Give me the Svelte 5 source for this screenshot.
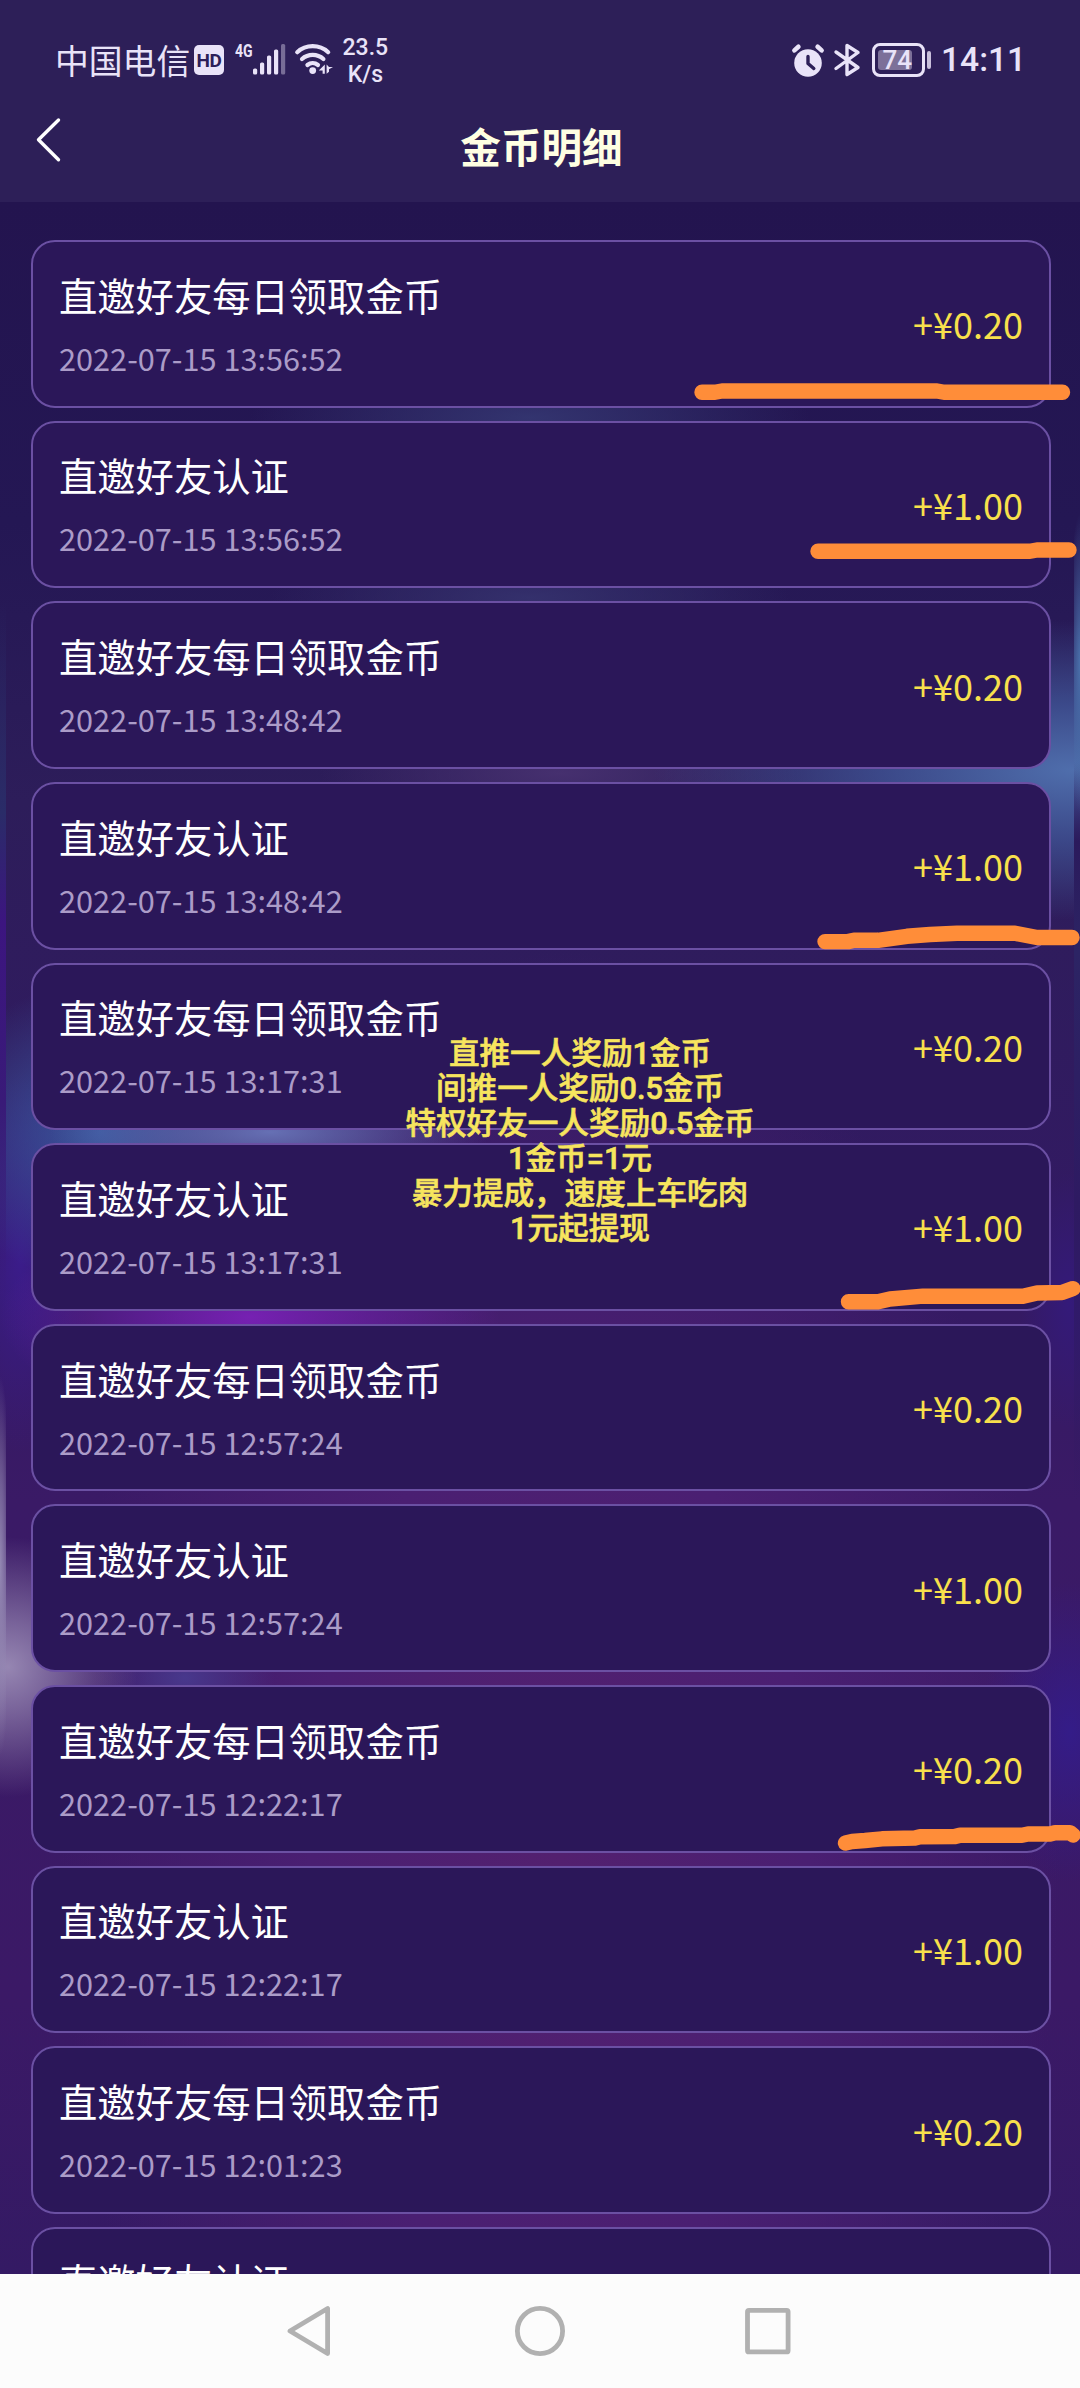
<script lang="ts">
    const DAILY = "直邀好友每日领取金币";
    const VERIFY = "直邀好友认证";

    const records = [
        { title: DAILY, time: "2022-07-15 13:56:52", amount: "0.20" },
        { title: VERIFY, time: "2022-07-15 13:56:52", amount: "1.00" },
        { title: DAILY, time: "2022-07-15 13:48:42", amount: "0.20" },
        { title: VERIFY, time: "2022-07-15 13:48:42", amount: "1.00" },
        { title: DAILY, time: "2022-07-15 13:17:31", amount: "0.20" },
        { title: VERIFY, time: "2022-07-15 13:17:31", amount: "1.00" },
        { title: DAILY, time: "2022-07-15 12:57:24", amount: "0.20" },
        { title: VERIFY, time: "2022-07-15 12:57:24", amount: "1.00" },
        { title: DAILY, time: "2022-07-15 12:22:17", amount: "0.20" },
        { title: VERIFY, time: "2022-07-15 12:22:17", amount: "1.00" },
        { title: DAILY, time: "2022-07-15 12:01:23", amount: "0.20" },
    ];

    const notes = [
        "直推一人奖励1金币",
        "间推一人奖励0.5金币",
        "特权好友一人奖励0.5金币",
        "1金币=1元",
        "暴力提成，速度上车吃肉",
        "1元起提现",
    ];

    // marker lines drawn over the list
    const strokes = [
        "702,392.3 715,392.3 722,391 937,391 944,392.3 1062.5,392.3",
        "818,551.3 1030,551.3 1037,550 1069,550",
        "825,941.6 848,941.6 854,940.3 878,940.3 907,936.3 930,934.5 957,933.2 1015,933.2 1037,937.5 1072,937.5",
        "848.5,1301.8 878,1301.8 890,1299 923,1296.2 1023,1296.2 1037,1293 1062,1292.5 1073,1288.6",
        "845.5,1843 852,1841.5 865,1840.5 882,1838.8 915,1838 920,1836.8 955,1836.5 960,1835.2 1022,1835.2 1028,1834 1050,1834 1055,1832.7 1070,1832.7 1073,1835",
    ];
</script>

<div class="screen">
    <header>
        <div class="status">
            <div class="status-left">
                <span class="carrier">中国电信</span>
                <span class="hd">HD</span>
                <span class="net">4G</span>
                <svg class="bars" width="34" height="32" viewBox="0 0 34 32">
                    <rect x="1" y="25.5" width="4.2" height="6" rx="1.6" />
                    <rect x="8" y="19.5" width="4.2" height="12" rx="1.6" />
                    <rect x="15" y="12.5" width="4.2" height="19" rx="1.6" />
                    <rect x="22" y="6.5" width="4.2" height="25" rx="1.6" />
                    <rect x="29" y="1" width="4.2" height="30.5" rx="1.6" opacity="0.4" />
                </svg>
                <svg class="wifi" width="40" height="34" viewBox="0 0 40 34">
                    <g fill="none" stroke="#e9e3f8" stroke-width="4.2" stroke-linecap="round">
                        <path d="M3.2 10.2a23 23 0 0 1 31 0" />
                        <path d="M8 17a16 16 0 0 1 21.4 0" />
                        <path d="M13.4 23a8.6 8.6 0 0 1 10.6 0" />
                    </g>
                    <circle cx="18.7" cy="28.6" r="3.4" />
                    <path d="M30.8 22.5v9.2h-2.2v-3.2h-3.8zM32.6 22.5v9.2l2.4-2v-2.4l4-2.2h-4z" />
                </svg>
                <span class="speed">23.5<br />K/s</span>
            </div>
            <div class="status-right">
                <svg width="34" height="34" viewBox="0 0 34 34">
                    <circle cx="17" cy="20" r="13.8" />
                    <path d="M3.4 7.4l4-3.6M30.6 7.4l-4-3.6" fill="none" stroke="#e9e3f8" stroke-width="4.6" stroke-linecap="round" />
                    <path d="M17 13.5v7l5.8 5" fill="none" stroke="#2d1f58" stroke-width="3.4" stroke-linecap="round" stroke-linejoin="round" />
                </svg>
                <svg class="bluetooth" width="28" height="34" viewBox="0 0 28 34">
                    <path d="M3 9l22 15.5-11 7V2.5l11 7L3 25.5" fill="none" stroke="#e9e3f8" stroke-width="3.4" stroke-linecap="round" stroke-linejoin="round" />
                </svg>
                <div class="battery"><span>74</span></div>
                <i class="nub"></i>
                <span class="clock">14:11</span>
            </div>
        </div>
        <div class="title-bar">
            <button class="back" aria-label="返回">
                <svg width="28" height="48" viewBox="0 0 28 48">
                    <path d="M24.5 4L4.5 23.8l20 20" fill="none" stroke="#fff" stroke-width="3.4" stroke-linecap="round" stroke-linejoin="round" />
                </svg>
            </button>
            <h1>金币明细</h1>
        </div>
    </header>

    <main>
        {#each records as record}
            <div class="card">
                <div class="info">
                    <div class="name">{record.title}</div>
                    <div class="time">{record.time}</div>
                </div>
                <div class="amount">+¥{record.amount}</div>
            </div>
        {/each}
        <div class="card last">
            <div class="name">{VERIFY}</div>
        </div>
    </main>

    <nav>
        <svg width="50" height="56" viewBox="0 0 50 56">
            <path d="M40.6 5.5v45L3 28z" />
        </svg>
        <svg width="56" height="56" viewBox="0 0 56 56">
            <circle cx="28" cy="28" r="22.6" />
        </svg>
        <svg width="50" height="56" viewBox="0 0 50 56">
            <rect x="4.5" y="7.3" width="40.6" height="41.6" rx="1.5" />
        </svg>
    </nav>

    <div class="notes">
        {#each notes as note}
            <div>{note}</div>
        {/each}
    </div>

    <svg class="marker" width="1080" height="2388" viewBox="0 0 1080 2388">
        {#each strokes as points}
            <polyline {points} />
        {/each}
    </svg>
</div>

<style>
    :global(body) {
        margin: 0;
        background: #fcfcfc;
    }

    .screen {
        position: relative;
        display: flex;
        flex-direction: column;
        width: 1080px;
        height: 2388px;
        overflow: hidden;
        font-family: "Noto Sans CJK SC", sans-serif;
    }

    header {
        height: 202px;
        flex: none;
        background: #2d1f58;
        color: #e9e3f8;
    }

    .status {
        display: flex;
        justify-content: space-between;
        height: 119px;
        padding: 0 59px 0 55px;
    }

    .status svg {
        fill: #e9e3f8;
    }

    .status-left,
    .status-right {
        display: flex;
        align-items: center;
        height: 120px;
    }

    .carrier {
        font-size: 33.8px;
        line-height: 40px;
        width: 139px;
        white-space: nowrap;
    }

    .hd {
        width: 30px;
        height: 30px;
        border-radius: 5px;
        background: #e9e3f8;
        color: #2d1f58;
        font: 700 19px/31px Roboto, sans-serif;
        text-align: center;
        letter-spacing: -0.5px;
    }

    .net {
        font: 700 19px/20px Roboto, sans-serif;
        width: 24px;
        margin: 0 -7px 18px 10.5px;
        transform: scaleX(0.74);
        transform-origin: left;
    }

    .bars {
        margin-top: -2px;
    }

    .wifi {
        margin: -2px 0 0 8px;
    }

    .speed {
        margin: 1px 0 0 9px;
        font: 500 23px/27px Roboto, sans-serif;
        text-align: center;
    }

    .bluetooth {
        margin-left: 8px;
    }

    .battery {
        box-sizing: border-box;
        width: 53px;
        height: 34px;
        margin-left: 11px;
        padding: 4px 3px;
        border: 3px solid #e9e3f8;
        border-radius: 8px;
    }

    .battery span {
        display: block;
        width: 34px;
        height: 20px;
        border-radius: 3px;
        background: #7c7099;
        font: 500 26px/21px Roboto, sans-serif;
        text-indent: 5px;
    }

    .nub {
        width: 4px;
        height: 18px;
        margin-left: 2.5px;
        border-radius: 2px;
        background: #c9c0dc;
    }

    .clock {
        width: 80px;
        margin-left: 10px;
        font: 500 33.6px/40px Roboto, sans-serif;
        white-space: nowrap;
    }

    .title-bar {
        display: grid;
        grid-template-columns: 1fr auto 1fr;
        height: 54px;
    }

    .back {
        width: 28px;
        height: 48px;
        margin: -3px 0 0 34px;
        padding: 0;
        border: none;
        background: none;
    }

    h1 {
        margin: 0;
        padding-left: 3px;
        color: #ffffe2;
        font-size: 40.6px;
        font-weight: 700;
        line-height: 53px;
    }

    main {
        display: flex;
        flex-direction: column;
        gap: 13px;
        height: 2072px;
        box-sizing: border-box;
        padding: 38px 29px 0 31px;
        overflow: hidden;
        background:
            radial-gradient(ellipse 12px 190px at 0 1364px, #9488b3 0, rgba(148, 136, 179, 0.6) 45%, transparent 100%) 0 0 / 6px 100% no-repeat,
            radial-gradient(ellipse 12px 150px at 6px 462px, #4a70aa 0, transparent 100%) 100% 0 / 6px 100% no-repeat,
            linear-gradient(transparent 400px, #2a2c68 610px, #3c1580 720px, #391a78 900px, transparent 1100px) 0 0 / 6px 100% no-repeat,
            linear-gradient(transparent 560px, #2b1a5c 640px, #2c2464 750px, #2e1a62 1000px, transparent 1300px) 100% 0 / 6px 100% no-repeat,
            radial-gradient(ellipse 130px 130px at 8px 1465px, #9686b2 0, rgba(140, 122, 170, 0.75) 35%, transparent 100%),
            radial-gradient(ellipse 90px 60px at 185px 1476px, #48388c 0, transparent 100%),
            radial-gradient(ellipse 420px 150px at 1074px 568px, #4f6eac 0, rgba(66, 92, 158, 0.7) 45%, transparent 100%),
            radial-gradient(ellipse 240px 60px at 560px 571px, #46306f 0, transparent 100%),
            radial-gradient(ellipse 280px 70px at 530px 216px, #33346f 0, transparent 100%),
            radial-gradient(ellipse 260px 60px at 530px 396px, #34306c 0, transparent 100%),
            radial-gradient(ellipse 220px 60px at 270px 930px, #6670b4 0, transparent 100%),
            radial-gradient(ellipse 170px 150px at 100px 930px, #3a589f 0, transparent 100%),
            radial-gradient(ellipse 250px 110px at 250px 1115px, #7621b2 0, transparent 100%),
            radial-gradient(ellipse 70px 190px at 20px 1060px, #3b1c8a 0, transparent 100%),
            radial-gradient(ellipse 50px 130px at 1070px 1100px, #341a7a 0, transparent 100%),
            radial-gradient(ellipse 90px 150px at 1070px 1530px, #341c88 0, transparent 100%),
            radial-gradient(ellipse 500px 900px at 560px 1650px, #53206f 0, #4a1f72 50%, transparent 100%),
            linear-gradient(#23144f 0, #241754 320px, #2d1d5a 600px, #321a62 1000px, #3a1a66 1300px, #3b1966 1800px, #341a64 100%);
    }

    .card {
        box-sizing: border-box;
        display: flex;
        flex: none;
        align-items: center;
        justify-content: space-between;
        height: 167.64px;
        padding: 0 26px;
        border: 2px solid #6b50a3;
        border-radius: 24px;
        background: #2b1759;
    }

    .last {
        align-items: flex-start;
        padding-top: 25px;
    }

    .name {
        color: #fff;
        font-size: 38.3px;
        line-height: 54px;
    }

    .time {
        margin-top: 14px;
        color: #ab9cc8;
        font-size: 30.7px;
        line-height: 44px;
    }

    .amount {
        color: #f8e04c;
        font-size: 36px;
        line-height: 51px;
    }

    nav {
        display: flex;
        align-items: center;
        justify-content: center;
        gap: 175px;
        height: 114px;
        background: #fcfcfc;
    }

    nav svg {
        fill: none;
        stroke: #b1b1b1;
        stroke-width: 4.8;
        stroke-linejoin: round;
    }

    /* caption laid over the list */
    .notes {
        position: absolute;
        top: 1036px;
        left: 380px;
        width: 400px;
        color: #f7e55e;
        font: 500 30.6px/35.1px Roboto, "Noto Sans CJK SC", sans-serif;
        -webkit-text-stroke: 0.6px #f7e55e;
        text-align: center;
        white-space: nowrap;
    }

    .marker {
        position: absolute;
        inset: 0;
        pointer-events: none;
    }

    .marker polyline {
        fill: none;
        stroke: #ff8d39;
        stroke-width: 15.4;
        stroke-linecap: round;
        stroke-linejoin: round;
    }
</style>
